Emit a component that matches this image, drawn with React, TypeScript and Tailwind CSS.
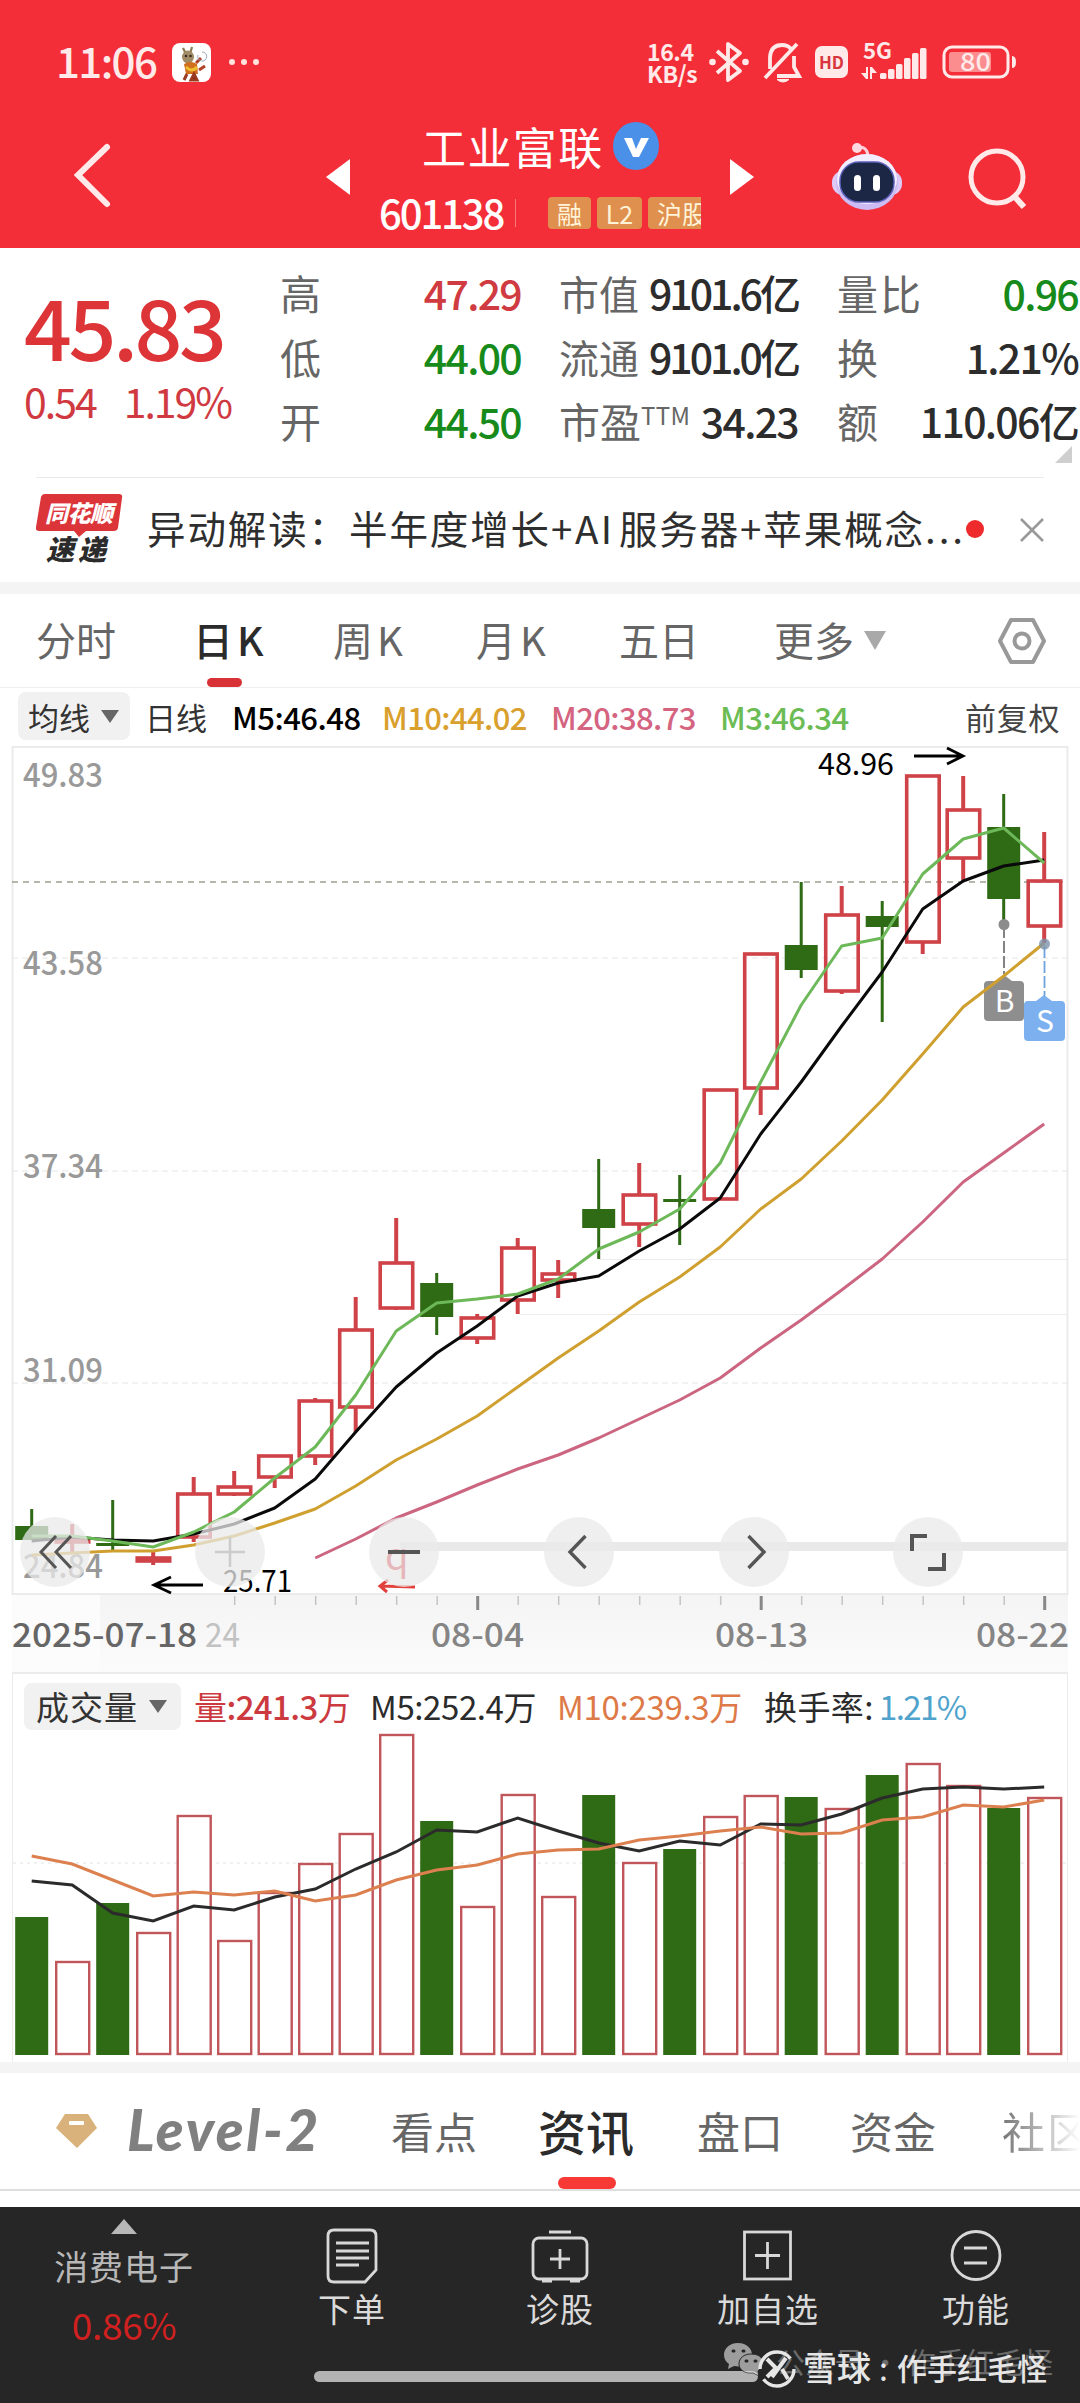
import type { ReactNode } from "react";
import { clsx } from "clsx";

const UP = "#cf4247";
const DOWN = "#2f6a15";

const X0 = 31.7;
const STEP = 40.5;
const xAt = (i: number) => X0 + i * STEP;

type Candle = [up: boolean, high: number, top: number, bottom: number, low: number];

const CANDLES: Candle[] = [
  [false, 1509, 1526, 1540, 1540],
  [true, 1524, 1539, 1542, 1552],
  [false, 1500, 1543, 1546, 1550],
  [true, 1552, 1558, 1561, 1565],
  [true, 1477, 1494, 1537, 1542],
  [true, 1471, 1487, 1494, 1496],
  [true, 1456, 1456, 1477, 1488],
  [true, 1398, 1401, 1456, 1465],
  [true, 1297, 1330, 1407, 1432],
  [true, 1218, 1263, 1308, 1310],
  [false, 1273, 1283, 1317, 1335],
  [true, 1314, 1318, 1338, 1344],
  [true, 1238, 1248, 1300, 1314],
  [true, 1260, 1274, 1280, 1298],
  [false, 1159, 1209, 1228, 1259],
  [true, 1163, 1195, 1224, 1247],
  [false, 1175, 1199, 1202, 1245],
  [true, 1090, 1090, 1199, 1199],
  [true, 954, 954, 1088, 1115],
  [false, 882, 945, 970, 978],
  [true, 886, 915, 991, 994],
  [false, 901, 916, 927, 1022],
  [true, 776, 776, 942, 954],
  [true, 776, 810, 858, 881],
  [false, 794, 827, 899, 924],
  [true, 832, 881, 926, 943],
];

const MA3 = [1536, 1536, 1541, 1547, 1532, 1512, 1478, 1447, 1395, 1331, 1303, 1299, 1294, 1279, 1249, 1232, 1209, 1163, 1082, 1005, 946, 938, 874, 839, 828, 863];
const MA5 = [1541, 1537, 1540, 1541, 1534, 1524, 1508, 1479, 1432, 1387, 1353, 1326, 1296, 1283, 1276, 1251, 1229, 1198, 1134, 1082, 1026, 972, 909, 881, 866, 860];
const MA10 = [1555, 1553, 1551, 1551, 1545, 1536, 1523, 1509, 1486, 1460, 1439, 1416, 1387, 1358, 1331, 1302, 1277, 1247, 1209, 1179, 1141, 1100, 1054, 1007, 976, 943];
const MA20 = [1558, 1539, 1518, 1502, 1485, 1469, 1455, 1438, 1419, 1400, 1378, 1348, 1320, 1290, 1259, 1222, 1182, 1153, 1124];

const VOLUME_TOPS = [1917, 1962, 1903, 1933, 1816, 1941, 1893, 1864, 1834, 1735, 1821, 1907, 1795, 1897, 1795, 1863, 1849, 1817, 1796, 1797, 1809, 1775, 1764, 1786, 1808, 1798];
const VOL5 = [1881, 1885, 1913, 1921, 1906, 1910, 1897, 1889, 1869, 1852, 1830, 1832, 1818, 1831, 1843, 1851, 1841, 1845, 1824, 1825, 1814, 1798, 1789, 1787, 1789, 1787];
const VOL10 = [1856, 1864, 1880, 1896, 1892, 1895, 1891, 1901, 1895, 1880, 1870, 1865, 1854, 1850, 1849, 1840, 1836, 1831, 1827, 1834, 1833, 1820, 1817, 1805, 1807, 1800];

const line = (ys: number[], from = 0) => ys.map((y, i) => `${xAt(i + from)},${y}`).join(" ");

interface LabelProps {
  x: number;
  y: number;
  w: number;
  size: number;
  fill: string;
  weight?: number;
  children: ReactNode;
}

/* Chart label: y is the baseline, w the drawn width */
function Label({ x, y, w, size, fill, weight = 400, children }: LabelProps) {
  return (
    <text
      x={x}
      y={y}
      fontSize={size}
      fill={fill}
      fontWeight={weight}
      textLength={w}
      lengthAdjust="spacingAndGlyphs"
    >
      {children}
    </text>
  );
}

function StatusBar() {
  return (
    <div className="flex h-[104px] items-center pt-5 pl-[56px] text-[#ffe9e9]">
      <span className="w-[116px] pb-[4px] text-[42px] leading-none font-medium tracking-[-1.6px]">11:06</span>
      <svg width="39" height="39" viewBox="0 0 39 39">
        <rect width="39" height="39" rx="8" fill="#fff" />
        <path d="M11 5l3 6M20 4l-2 7" stroke="#8a7a50" strokeWidth="2.2" />
        <ellipse cx="16" cy="14" rx="6" ry="6.500" fill="#a08c66" />
        <circle cx="14" cy="13" r="1.300" fill="#3a2c20" />
        <circle cx="18.500" cy="13" r="1.300" fill="#3a2c20" />
        <path d="M12 21q7-4 13 0l1 10H14z" fill="#d0701f" />
        <path d="M14 24q6 6 11 0" stroke="#f0c030" strokeWidth="3" fill="none" />
        <path d="M24 20l5-5M27 27l6-4" stroke="#b04028" strokeWidth="3" />
        <path d="M26 12a4.500 4.500 0 1 0 4-3" stroke="#9ab" fill="none" />
        <path d="M15 31l-3 6M22 31l3 6h-6z" stroke="#9c3a20" strokeWidth="3" />
      </svg>
      <span className="ml-[18px] flex gap-[6px]">
        <i className="size-[6px] rounded-full bg-[#ffe3dc]" />
        <i className="size-[6px] rounded-full bg-[#ffe3dc]" />
        <i className="size-[6px] rounded-full bg-[#ffe3dc]" />
      </span>
      <div className="ml-[388px] w-[62px] pb-[1px] text-[23px] leading-[22px] font-bold tracking-[-0.4px]">
        16.4
        <br />
        KB/s
      </div>
      {/* Bluetooth, muted bell, HD */}
      <svg width="40" height="42" viewBox="0 0 40 42" fill="none" stroke="#ffe9e9" strokeWidth="3.800">
        <path d="M8 10l23 20-12 9V3l12 9L8 32" strokeLinejoin="round" />
        <circle cx="3.500" cy="21" r="3.300" fill="#ffe9e9" stroke="none" />
        <circle cx="36.500" cy="21" r="3.300" fill="#ffe9e9" stroke="none" />
      </svg>
      <svg className="ml-[14px]" width="40" height="42" viewBox="0 0 40 42" fill="none" stroke="#ffe9e9" strokeWidth="3.800">
        <path d="M2 37L34 3" />
        <path d="M7 28V16Q8 4 19 4q6 0 9 4M31 15v11l5 9H14" />
        <path d="M14 38.500h12q-6 5-12 0z" fill="#ffe9e9" strokeWidth="1" />
      </svg>
      <span className="ml-[12px] flex h-[32px] w-[33px] items-center justify-center rounded-[7px] bg-[#ffe9e9] pb-px text-[17px] leading-none font-bold text-[#d8353d]">
        HD
      </span>
      <svg className="ml-[13px]" width="70" height="46" viewBox="0 -2 70 46" fill="#ffe9e9">
        <text x="2" y="18" fontSize="22" fontWeight="700" textLength="29" lengthAdjust="spacingAndGlyphs">
          5G
        </text>
        <path d="M5 26v12h2V26zM5 38l-5-6h5zM11 26v12h-2V26zM11 26l5 6h-5z" />
        {[6, 10, 15, 21, 26, 31].map((h, i) => (
          <rect key={h} x={19 + i * 8} y={38 - h} width="6.500" height={h} rx="1.500" />
        ))}
      </svg>
      <svg className="ml-[11px]" width="76" height="34" viewBox="0 0 76 34">
        <rect x="2" y="2" width="64" height="30" rx="8" fill="none" stroke="#ffe9e9" strokeWidth="3" />
        <rect x="7" y="7" width="42" height="20" rx="3" fill="#fb8d8f" />
        <path d="M70 11q4 0 4 6t-4 6z" fill="#ffe9e9" />
        <text x="18" y="26" fontSize="25" fill="#ffe9e9" fontWeight="500" textLength="31" lengthAdjust="spacingAndGlyphs">
          80
        </text>
      </svg>
    </div>
  );
}

function NavBar() {
  return (
    <div className="flex h-[144px] text-white">
      <svg className="mt-[37px] ml-[72px]" width="42" height="68" viewBox="0 0 42 68" fill="none" stroke="#ffe9e9" strokeWidth="6" strokeLinecap="round">
        <path d="M35 6L6 34l29 29" />
      </svg>
      <svg className="mt-[55px] ml-[212px]" width="24" height="36" viewBox="0 0 24 36" fill="#fff">
        <path d="M24 0v36L0 18z" />
      </svg>
      <div className="ml-[29px] w-[326px]">
        <div className="mt-[17px] flex h-[50px] items-center pl-[43px]">
          <span className="text-[44px] leading-none tracking-[1.4px]">工业富联</span>
          <svg className="ml-[9px]" width="46" height="48" viewBox="0 0 46 48">
            <ellipse cx="23" cy="24" rx="23" ry="24" fill="#4a90e8" />
            <path d="M11 16h8l4 11 5-11h8L26 35h-6z" fill="#fff" />
          </svg>
        </div>
        <div className="mt-[19px] flex h-[46px] items-center">
          <span className="w-[136px] pb-[3px] text-[40px] leading-none font-medium tracking-[-2.1px]">601138</span>
          <i className="h-7 w-px bg-[#f7797b]" />
          <div className="ml-[32px] flex w-[153px] gap-[6px] overflow-hidden text-[25px] leading-[32px] whitespace-nowrap text-[#fff3d8]">
            <span className="w-[43px] shrink-0 rounded-sm bg-[#e0904e] text-center">融</span>
            <span className="w-[45px] shrink-0 rounded-sm bg-[#e0904e] text-center">L2</span>
            <span className="w-[60px] shrink-0 rounded-sm bg-[#e0904e] pl-[9px]">沪股</span>
          </div>
        </div>
      </div>
      <svg className="mt-[55px] ml-[25px]" width="24" height="36" viewBox="0 0 24 36" fill="#fff">
        <path d="M0 0v36l24-18z" />
      </svg>
      {/* AI assistant */}
      <svg className="mt-[38px] ml-[77px]" width="72" height="70" viewBox="0 0 72 70">
        <path d="M25 6q11-3 12 8" stroke="#ffd0dc" strokeWidth="3" fill="none" />
        <circle cx="26" cy="6" r="5" fill="#ffd8e0" />
        <rect x="1" y="29" width="70" height="24" rx="11" fill="#dfc9f6" />
        <ellipse cx="36" cy="40" rx="31" ry="28" fill="#cdbcf4" />
        <ellipse cx="36" cy="37" rx="30" ry="25" fill="#f3edff" />
        <rect x="9" y="20" width="54" height="40" rx="19" fill="#1c2645" stroke="#5a5fb8" strokeWidth="1.500" />
        <rect x="23" y="33" width="7" height="16" rx="3.500" fill="#fff" />
        <rect x="42" y="33" width="7" height="16" rx="3.500" fill="#fff" />
      </svg>
      <svg className="mt-[41px] ml-[63px]" width="64" height="66" viewBox="0 0 64 66" fill="none" stroke="#ffe9e9" strokeWidth="5">
        <circle cx="31" cy="32" r="26" />
        <path d="M48 51l10 11" strokeWidth="6" />
      </svg>
    </div>
  );
}

interface QuoteRowProps {
  label: ReactNode;
  value: string;
  tone?: string;
  tight?: boolean;
}

function QuoteRow({ label, value, tone = "text-[#2c2c2c]", tight }: QuoteRowProps) {
  return (
    <div className="flex h-16 items-center justify-between pb-[3px] text-[41px] leading-none whitespace-nowrap">
      <span className="text-[#666]">{label}</span>
      <span className={clsx("font-medium", tight ? "tracking-[-3px]" : "tracking-[-1.7px]", tone)}>{value}</span>
    </div>
  );
}

function Quote() {
  return (
    <div className="relative flex h-[229px] pt-[14px]">
      <div className="w-[280px] pl-[24px] text-[#dd3438]">
        <div className="mt-[21px] h-[84px] text-[84px] leading-[84px] font-medium tracking-[-3.4px]">45.83</div>
        <div className="mt-[13px] flex gap-[28px] text-[41px] leading-none tracking-[-2px] text-[#d0393f]">
          <span>0.54</span>
          <span>1.19%</span>
        </div>
      </div>
      <div className="w-[241px]">
        <QuoteRow label="高" value="47.29" tone="text-[#cf3b40]" />
        <QuoteRow label="低" value="44.00" tone="text-[#168a1a]" />
        <QuoteRow label="开" value="44.50" tone="text-[#168a1a]" />
      </div>
      <div className="ml-[38px] w-[239px]">
        <QuoteRow label={<span className="text-[40px]">市值</span>} value="9101.6亿" tight />
        <QuoteRow label={<span className="text-[40px]">流通</span>} value="9101.0亿" tight />
        <QuoteRow
          label={
            <>
              市盈<span className="inline-block -translate-y-[13px] text-[24px] tracking-[0.4px]">TTM</span>
            </>
          }
          value="34.23"
        />
      </div>
      <div className="ml-[39px] w-[241px]">
        <QuoteRow label={<span className="tracking-[2px]">量比</span>} value="0.96" tone="text-[#168a1a]" />
        <QuoteRow label="换" value="1.21%" />
        <QuoteRow label="额" value="110.06亿" />
      </div>
      <svg className="absolute right-2 bottom-[14px]" width="17" height="17" viewBox="0 0 17 17">
        <path d="M17 0v17H0z" fill="#cfcfcf" />
      </svg>
    </div>
  );
}

function NewsRow() {
  return (
    <div className="mx-9 flex h-[105px] border-t border-[#e9e9e9]">
      <div className="relative mt-4 w-[88px]">
        <svg width="88" height="44" viewBox="0 0 88 44" fill="#db353a">
          <path d="M9 0h74q4 0 3 4l-4 30q-1 3-4 3H50l-7 6-5-6H3q-4 0-3-4L5 3q1-3 4-3z" />
        </svg>
        <span className="absolute top-[5px] left-[9px] text-[23px] leading-[27px] font-black tracking-[-0.5px] text-white italic">
          同花顺
        </span>
        <span className="absolute top-[39px] left-[10px] text-[28px] leading-[30px] font-black tracking-[4px] whitespace-nowrap text-[#2b2b2b] italic">
          速递
        </span>
      </div>
      <div className="mt-[-4px] ml-[23px] flex w-[823px] items-center text-[38.5px] tracking-[1.9px] whitespace-nowrap text-[#2e2e2e]">
        异动解读：半年度增长<span className="tracking-[2.5px]">+AI</span>&#8202;服务器+苹果概念
        <span className="tracking-[3px]">...</span>
      </div>
      <div className="mt-[42px] size-[18px] shrink-0 rounded-full bg-[#ee2a2c]" />
      <svg className="mt-[40px] ml-[36px] shrink-0" width="24" height="24" viewBox="0 0 24 24" stroke="#999" strokeWidth="2.600">
        <path d="M1 1l22 22M23 1L1 23" />
      </svg>
    </div>
  );
}

const PERIODS = [
  { name: "分时", width: "w-[157px]" },
  { name: "日K", width: "w-[140px]", active: true },
  { name: "周K", width: "w-[143px]" },
  { name: "月K", width: "w-[143px]" },
  { name: "五日", width: "w-[155px]" },
  { name: "更多", width: "w-[90px]" },
];

function PeriodTabs() {
  return (
    <div className="flex h-[94px] items-center border-b border-[#efefef] pl-[36px] text-[40px] leading-none text-[#666]">
      {PERIODS.map((p) => (
        <div key={p.name} className={clsx("relative flex h-full items-center pb-[3px] whitespace-nowrap", p.width, p.active && "font-medium text-[#2b2b2b]")}>
          {p.name.endsWith("K") ? (
            <>
              {p.name[0]}
              <span className="ml-[4px]">K</span>
            </>
          ) : (
            p.name
          )}
          {p.active && <i className="absolute bottom-0 left-[14px] h-[9px] w-[35px] rounded-full bg-[#d93236]" />}
        </div>
      ))}
      <svg width="22" height="19" viewBox="0 0 22 19" fill="#a9a9a9">
        <path d="M0 0h22L11 19z" />
      </svg>
      <svg className="ml-[111px]" width="50" height="48" viewBox="0 0 50 48" fill="none" stroke="#999" strokeWidth="4">
        <path d="M14 3h22l11 21-11 21H14L3 24z" strokeLinejoin="round" />
        <circle cx="25" cy="24" r="7.500" />
      </svg>
    </div>
  );
}

function DropChip({ children, className }: { children: ReactNode; className?: string }) {
  return (
    <span className={clsx("flex items-center rounded-lg bg-[#f1f1f1] text-[#333]", className)}>
      {children}
      <svg className="ml-[11px]" width="18" height="13" viewBox="0 0 18 13" fill="#666">
        <path d="M0 0h18L9 13z" />
      </svg>
    </span>
  );
}

function AverageLegend() {
  return (
    <div className="flex h-[58px] items-center pb-[2px] pl-[18px] text-[31px] leading-none whitespace-nowrap">
      <DropChip className="h-[48px] w-[112px] pl-[10px]">均线</DropChip>
      <span className="ml-[15px] w-[87px] text-[#333]">日线</span>
      <span className="w-[150px] font-medium tracking-[-0.5px] text-black">M5:46.48</span>
      <span className="w-[169px] font-medium tracking-[-0.6px] text-[#d9a02e]">M10:44.02</span>
      <span className="w-[169px] font-medium tracking-[-0.6px] text-[#d4647f]">M20:38.73</span>
      <span className="w-[245px] font-medium tracking-[-0.5px] text-[#6cbc55]">M3:46.34</span>
      <span className="tracking-[0.8px] text-[#444]">前复权</span>
    </div>
  );
}

function CandleShape({ candle, x }: { candle: Candle; x: number }) {
  const [up, high, top, bottom, low] = candle;
  if (!up) {
    return (
      <g fill={DOWN}>
        <rect x={x - 1.5} y={high} width="3" height={low - high} />
        <rect x={x - 16.5} y={top} width="33" height={bottom - top} />
      </g>
    );
  }
  return (
    <g fill="none" stroke={UP} strokeWidth="3.600">
      <path d={`M${x} ${high}V${top}M${x} ${bottom}V${low}`} strokeWidth="4" />
      <rect x={x - 16} y={top} width="32.500" height={bottom - top} />
    </g>
  );
}

function RoundButton({ children }: { children: ReactNode }) {
  return (
    <button className="flex size-[70px] items-center justify-center rounded-full bg-[#e9e9e9]/75 text-[#555]">
      {children}
    </button>
  );
}

function PriceChart() {
  return (
    <div className="relative h-[926px]">
      <svg width="1080" height="926" viewBox="0 746 1080 926">
        <defs>
          <linearGradient id="axisFade" x1="0" y1="0" x2="0" y2="1">
            <stop offset="0" stopColor="#f4f4f4" />
            <stop offset="1" stopColor="#fbfbfb" />
          </linearGradient>
        </defs>
        <rect x="100" y="1595" width="968" height="77" fill="url(#axisFade)" />
        <rect x="12" y="1595" width="88" height="77" fill="#fcfcfc" />
        <rect x="12.500" y="747" width="1055" height="847" fill="none" stroke="#ebebeb" strokeWidth="2" />
        <path d="M12 958H1068M12 1171H1068M12 1383H1068" stroke="#e6e6e6" strokeDasharray="6 4" />
        <path d="M519 1314.500H1068M600 1259.500H1068" stroke="#ececec" />
        <path d="M12 882H1068" stroke="#9da08f" strokeWidth="1.500" strokeDasharray="6 5" />

        <Label x={23} y={787} w={80} size={33} fill="#999" weight={500}>49.83</Label>
        <Label x={23} y={975} w={80} size={33} fill="#999" weight={500}>43.58</Label>
        <Label x={23} y={1178} w={80} size={33} fill="#999" weight={500}>37.34</Label>
        <Label x={23} y={1382} w={80} size={33} fill="#999" weight={500}>31.09</Label>
        <Label x={23} y={1578} w={80} size={33} fill="#999" weight={500}>24.84</Label>

        <rect x="400" y="1542" width="668" height="9" fill="#e9e9e9" />

        {CANDLES.map((c, i) => (
          <CandleShape key={i} candle={c} x={xAt(i)} />
        ))}

        <g fill="none" strokeWidth="3" strokeLinejoin="round">
          <polyline points={line(MA20, 7)} stroke="#cc6580" />
          <polyline points={line(MA5)} stroke="#0a0a0a" />
          <polyline points={line(MA3)} stroke="#6db858" />
        </g>

        {/* Buy / sell markers */}
        <path d="M1004 926V974" stroke="#777" strokeWidth="1.800" strokeDasharray="12 3" />
        <path d="M1044.500 946V996" stroke="#6fa3dd" strokeWidth="1.800" strokeDasharray="12 3" />
        <circle cx="1004" cy="924.500" r="5.500" fill="#8c8c8c" />
        <path d="M988 981h8l8-6 8 6h8q4 0 4 4v32q0 4-4 4h-32q-4 0-4-4v-32q0-4 4-4z" fill="#8e8e8e" />
        <path d="M1028 1001h8l8-6 8 6h9q4 0 4 4v32q0 4-4 4h-33q-4 0-4-4v-32q0-4 4-4z" fill="#7cb0ee" />
        <text x="1004.500" y="1012" fontSize="30" fill="#fff" textAnchor="middle">B</text>
        <text x="1045" y="1032" fontSize="30" fill="#fff" textAnchor="middle">S</text>
        <polyline points={line(MA10)} fill="none" stroke="#cfa02f" strokeWidth="3" strokeLinejoin="round" />
        <circle cx="1044.500" cy="944" r="5.500" fill="#7d93ad" opacity="0.8" />

        <Label x={818} y={775} w={76} size={30} fill="#000">48.96</Label>
        <path d="M914 756h49M947 748l16 8-16 8" stroke="#000" strokeWidth="2.800" fill="none" />
        <Label x={223} y={1592} w={69} size={30} fill="#000">25.71</Label>
        <path d="M203 1585h-49M171 1577l-17 8 17 8" stroke="#000" strokeWidth="2.800" fill="none" />
        <text x="385" y="1570" fontSize="38" fill="#d8202c">q</text>
        <path d="M415 1587l-35-1M388 1580l-8 6 7 6" stroke="#e2403c" strokeWidth="3" fill="none" />

        {/* Date axis */}
        {Array.from({ length: 21 }, (_, k) => k + 5).map((i) => {
          const major = i === 11 || i === 18 || i === 25;
          return (
            <path
              key={i}
              d={`M${xAt(i) + 0.5} 1596v${major ? 14 : 9}`}
              stroke={major ? "#888" : "#c4c4c4"}
              strokeWidth={major ? 3 : 1.5}
            />
          );
        })}
        <Label x={12} y={1647} w={185} size={33} fill="#666" weight={500}>2025-07-18</Label>
        <Label x={205} y={1647} w={35} size={33} fill="#c2c2c2">24</Label>
        <Label x={431} y={1647} w={93} size={33} fill="#858585" weight={500}>08-04</Label>
        <Label x={715} y={1647} w={93} size={33} fill="#858585" weight={500}>08-13</Label>
        <Label x={976} y={1647} w={93} size={33} fill="#858585" weight={500}>08-22</Label>
      </svg>

      <div className="absolute top-[771px] left-[20px] flex gap-[104.700px]">
        <RoundButton>
          <svg width="34" height="34" viewBox="0 0 34 34" fill="none" stroke="currentColor" strokeWidth="3">
            <path d="M18 1L3 17l15 16M33 1L18 17l15 16" />
          </svg>
        </RoundButton>
        <RoundButton>
          <svg width="32" height="32" viewBox="0 0 32 32" stroke="#ccc" strokeWidth="2.500">
            <path d="M16 1v30M1 16h30" />
          </svg>
        </RoundButton>
        <RoundButton>
          <svg width="32" height="4" viewBox="0 0 32 4" fill="currentColor">
            <path d="M0 0h32v4H0z" />
          </svg>
        </RoundButton>
        <RoundButton>
          <svg className="mr-[4px]" width="20" height="36" viewBox="0 0 20 36" fill="none" stroke="currentColor" strokeWidth="3.400">
            <path d="M18.500 2L3 18l15.500 16" />
          </svg>
        </RoundButton>
        <RoundButton>
          <svg className="ml-[6px]" width="20" height="36" viewBox="0 0 20 36" fill="none" stroke="currentColor" strokeWidth="3.400">
            <path d="M1.500 2L17 18 1.500 34" />
          </svg>
        </RoundButton>
        <RoundButton>
          <svg width="38" height="38" viewBox="0 0 38 38" fill="none" stroke="currentColor" strokeWidth="4">
            <path d="M3 18V3h15M35 20v16H19" />
          </svg>
        </RoundButton>
      </div>
    </div>
  );
}

function VolumePanel() {
  return (
    <div className="mx-3 h-[390px] border-x border-t-2 border-[#ebebeb]">
      <div className="flex h-[58px] items-center pt-[6px] pl-[11px] text-[33px] leading-none whitespace-nowrap">
        <DropChip className="h-[47px] w-[157px] pl-[12px] tracking-[1px]">成交量</DropChip>
        <span className="ml-[13px] w-[176px] tracking-[-0.6px] text-[#cc3a40]">
          量<span className="font-medium">:241.3</span>万
        </span>
        <span className="w-[187px] tracking-[-0.4px] text-[#2b2b2b]">M5:252.4万</span>
        <span className="w-[207px] tracking-[-0.3px] text-[#dd7a48]">M10:239.3万</span>
        <span className="w-[115px] tracking-[0.4px] text-[#2b2b2b]">换手率:</span>
        <span className="tracking-[-1.6px] text-[#4fa3cc]">1.21%</span>
      </div>
      <svg width="1054" height="330" viewBox="13 1732 1054 330">
        <path d="M13 1863H1067" stroke="#e2e2e2" strokeDasharray="3 4" />
        {VOLUME_TOPS.map((top, i) =>
          CANDLES[i][0] ? (
            <rect key={i} x={xAt(i) - 16} y={top} width="33" height={2054 - top} fill="#fff" stroke="#c0555a" strokeWidth="2.400" />
          ) : (
            <rect key={i} x={xAt(i) - 16.5} y={top} width="33" height={2055 - top} fill={DOWN} />
          ),
        )}
        <g fill="none" strokeWidth="3">
          <polyline points={line(VOL5)} stroke="#2b2b2b" />
          <polyline points={line(VOL10)} stroke="#dc8050" />
        </g>
      </svg>
    </div>
  );
}

function InfoTabs() {
  return (
    <div className="flex h-[118px] items-center border-b-2 border-[#dedede] pl-[56px] text-[43px] leading-none whitespace-nowrap text-[#666]">
      <svg width="41" height="36" viewBox="0 0 41 36">
        <path d="M9 1h23l9 14-20 20L0 15z" fill="#d8b27a" />
        <rect x="13" y="8" width="15" height="4" rx="1" fill="#fff" />
      </svg>
      <span className="ml-[30px] w-[264px] pb-[3px] font-[Lato] text-[57px] font-black tracking-[2.600px] text-[#808080] italic">
        Level-2
      </span>
      <span className="w-[147px] pb-[2px]">看点</span>
      <div className="relative flex h-full w-[159px] items-center pb-[3px] text-[48px] font-medium text-[#2b2b2b]">
        资讯
        <i className="absolute bottom-0 left-[20px] h-[12px] w-[58px] rounded-full bg-[#f83a37]" />
      </div>
      <span className="w-[153px] pb-[2px]">盘口</span>
      <span className="w-[152px] pb-[2px]">资金</span>
      <span className="w-[78px] overflow-hidden bg-gradient-to-r from-[#777] to-[#fff] bg-clip-text pb-[2px] tracking-[2px] text-transparent">
        社区
      </span>
    </div>
  );
}

function BottomItem({ label, children, className }: { label: string; children: ReactNode; className: string }) {
  return (
    <div className={clsx("flex flex-col items-center pt-[21px]", className)}>
      <svg width="58" height="56" viewBox="0 0 58 56" fill="none" stroke="#d8d8d8" strokeWidth="2.800">
        {children}
      </svg>
      <span className="mt-[5px] text-[33px] leading-[38px] tracking-[1px] text-[#dadada]">{label}</span>
    </div>
  );
}

function BottomBar() {
  return (
    <div className="relative flex h-[196px] bg-[#262626]">
      <div className="flex w-[248px] flex-col items-center pt-[12px]">
        <svg width="26" height="15" viewBox="0 0 26 15" fill="#b8b8b8">
          <path d="M13 0l13 15H0z" />
        </svg>
        <span className="mt-[13px] text-[34px] leading-[38px] tracking-[0.9px] text-[#b8b8b8]">消费电子</span>
        <span className="mt-[20px] text-[37px] leading-[38px] tracking-[-0.3px] text-[#d0201f]">0.86%</span>
      </div>
      <BottomItem label="下单" className="w-[208px]">
        <path d="M11 2h36q6 0 6 6v34L42 54H11q-6 0-6-6V8q0-6 6-6z" />
        <path d="M13 15h33M13 23h33M13 30h33M13 37h23" />
      </BottomItem>
      <BottomItem label="诊股" className="w-[208px]">
        <rect x="2" y="10" width="54" height="41" rx="6" />
        <path d="M18 4h22M29 21v20M19 31h20M11 53h10M39 53h10" />
      </BottomItem>
      <BottomItem label="加自选" className="w-[208px]">
        <rect x="5.500" y="4" width="46" height="47" />
        <path d="M28.500 14v27M16 27.500h25" />
      </BottomItem>
      <BottomItem label="功能" className="w-[208px]">
        <circle cx="29" cy="27.500" r="24" />
        <path d="M17 20h23M17 35h23" />
      </BottomItem>

      {/* Home indicator and watermarks */}
      <i className="absolute bottom-[21px] left-[314px] h-[11px] w-[444px] rounded-full bg-[#b3b3b3]" />
      <div className="absolute top-[136px] left-[723px] flex items-start">
        <svg width="42" height="34" viewBox="0 0 42 34" className="opacity-65">
          <path d="M15 0C6 0 1 6 1 12c0 4 2 7 5 9l-1 5 6-3c12 2 18-3 18-11C29 6 24 0 15 0z" fill="#ddd" />
          <path d="M28 11c-7 0-12 4-12 10s6 10 14 9l6 3-1-5c4-4 5-6 5-8 0-6-5-9-12-9z" fill="#ddd" stroke="#262626" />
          <path d="M10 8h1M20 8h1M23 18h1M32 18h1" stroke="#262626" strokeWidth="3" strokeLinecap="round" />
        </svg>
        <span className="ml-[11px] text-[29px] leading-[36px] tracking-[0.3px] whitespace-nowrap text-[#6a6a6a]">
          公众号 · 作手红毛怪
        </span>
      </div>
      <div className="absolute top-[140px] left-[758px] flex items-center text-[#e6e6e6]">
        <svg width="38" height="40" viewBox="0 0 38 40" fill="none" stroke="#e6e6e6" strokeWidth="3.400">
          <circle cx="19" cy="20" r="17" strokeDasharray="42 11" />
          <path d="M9 10l9 9-9 9M28 9L14 28M24 20l6 10" strokeWidth="4" />
        </svg>
        <span className="ml-[7px] w-[72px] pb-[3px] text-[34px] leading-[40px] font-medium">雪球</span>
        <span className="w-[22px] pb-[3px] pl-[4px] text-[32px] leading-[40px]">:</span>
        <span className="pb-[3px] text-[30px] leading-[40px] font-medium whitespace-nowrap">作手红毛怪</span>
      </div>
    </div>
  );
}

export default function App() {
  return (
    <div className="h-[2403px] w-[1080px] overflow-hidden bg-white font-['Noto_Sans_CJK_SC','Noto_Sans',sans-serif]">
      <header className="bg-[#f32e38]">
        <StatusBar />
        <NavBar />
      </header>
      <Quote />
      <NewsRow />
      <div className="h-[12px] bg-[#f4f4f4]" />
      <PeriodTabs />
      <AverageLegend />
      <PriceChart />
      <VolumePanel />
      <div className="h-[11px] bg-[#f4f4f4]" />
      <InfoTabs />
      <div className="h-[16px]" />
      <BottomBar />
    </div>
  );
}
